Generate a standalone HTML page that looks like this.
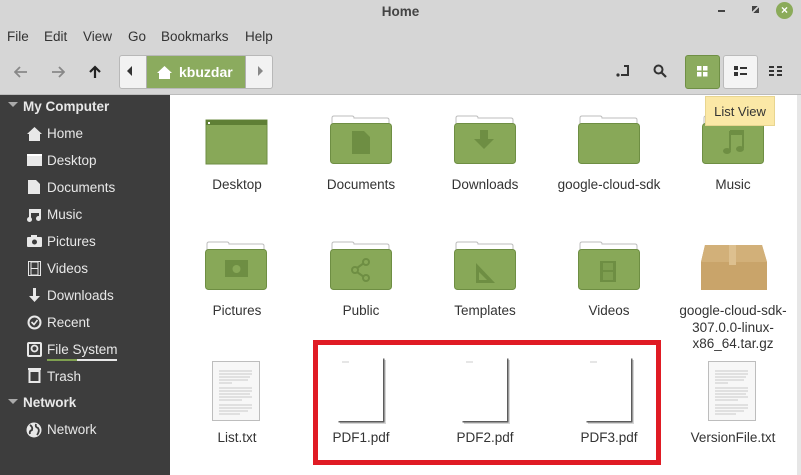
<!DOCTYPE html>
<html><head><meta charset="utf-8"><style>
*{margin:0;padding:0;box-sizing:border-box}
body{width:801px;height:475px;overflow:hidden;background:#d6d6d6;font-family:"Liberation Sans","DejaVu Sans",sans-serif;position:relative;color:#303030}
.a{position:absolute}
.menu span{position:absolute;top:29px;font-size:13.5px;color:#333}
.side{left:0;top:95px;width:170px;height:380px;background:#3d3d3d;color:#e8e8e8}
.side div{position:absolute;font-size:13.5px}
.content{left:170px;top:95px;width:627px;height:380px;background:#fff}
.lbl{position:absolute;width:124px;text-align:center;font-size:13.5px;color:#333;line-height:16px}
.ic{position:absolute}
</style></head><body>
<div class="a" style="left:0;top:4px;width:801px;text-align:center;font-size:13.5px;font-weight:bold;color:#444">Home</div>
<div class="a" style="left:718px;top:10px;width:7px;height:2px;background:#444"></div>
<div class="a" style="left:752px;top:6px;width:7px;height:7px;background:linear-gradient(135deg,#444 40%,transparent 40%,transparent 60%,#444 60%)"></div>
<div class="a" style="left:776px;top:2px;width:17px;height:17px;border-radius:50%;background:#8bab5a;color:#fff;font-size:12px;font-weight:bold;text-align:center;line-height:17px">×</div>
<div class="menu"><span style="left:7px">File</span><span style="left:44px">Edit</span><span style="left:83px">View</span><span style="left:128px">Go</span><span style="left:161px">Bookmarks</span><span style="left:245px">Help</span></div>
<!-- toolbar -->
<svg class="a" style="left:14px;top:66px" width="14" height="12"><path d="M13 6H2M6 1L1 6L6 11" fill="none" stroke="#888" stroke-width="1.8"/></svg>
<svg class="a" style="left:51px;top:66px" width="14" height="12"><path d="M1 6H12M8 1L13 6L8 11" fill="none" stroke="#888" stroke-width="1.8"/></svg>
<svg class="a" style="left:89px;top:65px" width="12" height="14"><path d="M6 13V2M1 7L6 2L11 7" fill="none" stroke="#222" stroke-width="2.2"/></svg>
<div class="a" style="left:119px;top:55px;width:154px;height:34px;border:1px solid #b8b8b8;border-radius:3px;background:#f2f2f2;overflow:hidden">
 <div class="a" style="left:7px;top:10px;width:0;height:0;border-top:5px solid transparent;border-bottom:5px solid transparent;border-right:5px solid #333"></div>
 <div class="a" style="left:26px;top:0;width:100px;height:34px;background:#8bab5e;border-left:1px solid #b0b0b0;border-right:1px solid #b0b0b0"></div>
 <svg class="a" style="left:37px;top:10px" width="15" height="13"><path d="M7.5 0L15 7H13V13H2V7H0Z" fill="#fff"/></svg>
 <div class="a" style="left:59px;top:8px;color:#fff;font-weight:bold;font-size:14px">kbuzdar</div>
 <div class="a" style="left:138px;top:10px;width:0;height:0;border-top:5px solid transparent;border-bottom:5px solid transparent;border-left:5px solid #888"></div>
</div>
<svg class="a" style="left:616px;top:64px" width="16" height="14"><path d="M8 2H12V11H5" fill="none" stroke="#333" stroke-width="2"/><circle cx="2" cy="11" r="1.6" fill="#333"/></svg>
<svg class="a" style="left:653px;top:64px" width="14" height="14"><circle cx="5.5" cy="5.5" r="4" fill="none" stroke="#333" stroke-width="2"/><path d="M8.5 8.5L13 13" stroke="#333" stroke-width="2.2"/></svg>
<div class="a" style="left:685px;top:55px;width:35px;height:34px;background:#8bab5e;border:1px solid #6f8f45;border-radius:3px"></div>
<svg class="a" style="left:697px;top:66px" width="11" height="11" fill="#fff"><rect x="0" y="0" width="4.5" height="4.5"/><rect x="6" y="0" width="4.5" height="4.5"/><rect x="0" y="6" width="4.5" height="4.5"/><rect x="6" y="6" width="4.5" height="4.5"/></svg>
<div class="a" style="left:723px;top:55px;width:35px;height:34px;background:#f4f4f4;border:1px solid #bbb;border-radius:3px"></div>
<svg class="a" style="left:734px;top:66px" width="14" height="11" fill="#333"><rect x="0" y="0" width="4" height="4"/><rect x="6" y="1" width="7" height="2"/><rect x="0" y="6" width="4" height="4"/><rect x="6" y="7" width="7" height="2"/></svg>
<svg class="a" style="left:769px;top:66px" width="14" height="11" fill="#333"><rect x="0" y="0" width="5" height="2"/><rect x="8" y="0" width="5" height="2"/><rect x="0" y="4" width="5" height="2"/><rect x="8" y="4" width="5" height="2"/><rect x="0" y="8" width="5" height="2"/><rect x="8" y="8" width="5" height="2"/></svg>
<div class="a" style="left:0;top:94px;width:801px;height:1px;background:#bcbcbc"></div>
<!-- sidebar -->
<div class="a side">
 <div style="left:8px;top:7px;width:0;height:0;border-left:5px solid transparent;border-right:5px solid transparent;border-top:5px solid #aaa"></div>
 <div style="left:23px;top:4px;font-weight:bold">My Computer</div>
 <svg style="position:absolute;left:27px;top:32px" width="15" height="14"><path d="M7.5 0L15 7H13V14H2V7H0Z" fill="#e8e8e8"/></svg><div style="left:47px;top:31px">Home</div>
 <div style="left:27px;top:59px;width:15px;height:12px;background:#e8e8e8;border-top:2px solid #fff"></div><div style="left:47px;top:58px">Desktop</div>
 <svg style="position:absolute;left:28px;top:85px" width="12" height="14"><path d="M0 0H8L12 4V14H0Z" fill="#e8e8e8"/></svg><div style="left:47px;top:85px">Documents</div>
 <svg style="position:absolute;left:27px;top:113px" width="14" height="14"><path d="M3 11V2H13V10M3 2V4H13" fill="none" stroke="#e8e8e8" stroke-width="2"/><circle cx="2.5" cy="11.5" r="2.5" fill="#e8e8e8"/><circle cx="11.5" cy="10.5" r="2.5" fill="#e8e8e8"/></svg><div style="left:47px;top:112px">Music</div>
 <svg style="position:absolute;left:27px;top:140px" width="15" height="12"><rect x="0" y="2" width="15" height="10" rx="1" fill="#e8e8e8"/><rect x="4" y="0" width="6" height="3" fill="#e8e8e8"/><circle cx="7.5" cy="7" r="2.5" fill="#3d3d3d"/></svg><div style="left:47px;top:139px">Pictures</div>
 <svg style="position:absolute;left:28px;top:166px" width="13" height="15"><rect x="0.5" y="0.5" width="12" height="14" fill="none" stroke="#e8e8e8"/><rect x="3" y="1" width="7" height="13" fill="none" stroke="#e8e8e8"/><path d="M3 7.5H10" stroke="#e8e8e8"/></svg><div style="left:47px;top:166px">Videos</div>
 <svg style="position:absolute;left:28px;top:193px" width="13" height="14"><path d="M5 0H8V8H12L6.5 14L1 8H5Z" fill="#e8e8e8"/></svg><div style="left:47px;top:193px">Downloads</div>
 <svg style="position:absolute;left:27px;top:220px" width="15" height="15"><circle cx="7.5" cy="7.5" r="6" fill="none" stroke="#e8e8e8" stroke-width="2"/><path d="M4.5 7L7 9.5L10.5 5" fill="none" stroke="#e8e8e8" stroke-width="1.6"/></svg><div style="left:47px;top:220px">Recent</div>
 <svg style="position:absolute;left:27px;top:247px" width="15" height="15"><rect x="1" y="1" width="13" height="13" rx="1" fill="none" stroke="#e8e8e8" stroke-width="2"/><circle cx="7.5" cy="6.5" r="3" fill="none" stroke="#e8e8e8" stroke-width="1.8"/></svg><div style="left:47px;top:247px">File System</div>
 <div style="left:47px;top:264px;width:70px;height:2px;background:#e8e8e8"></div><div style="left:47px;top:264px;width:30px;height:2px;background:#7fa050"></div>
 <svg style="position:absolute;left:28px;top:273px" width="13" height="15"><rect x="0" y="0" width="13" height="2" fill="#e8e8e8"/><rect x="1.5" y="3" width="10" height="11" fill="none" stroke="#e8e8e8" stroke-width="2"/></svg><div style="left:47px;top:274px">Trash</div>
 <div style="left:8px;top:304px;width:0;height:0;border-left:5px solid transparent;border-right:5px solid transparent;border-top:5px solid #aaa"></div>
 <div style="left:23px;top:300px;font-weight:bold">Network</div>
 <svg style="position:absolute;left:26px;top:327px" width="16" height="16"><circle cx="8" cy="8" r="7.5" fill="#e8e8e8"/><path d="M4 3Q7 5 6 8Q3 9 4 12M10 2Q9 5 12 6Q14 9 11 13" fill="none" stroke="#3d3d3d" stroke-width="1.8"/></svg><div style="left:47px;top:327px">Network</div>
</div>
<div class="a content"></div>
<div class="a" style="left:797px;top:95px;width:4px;height:380px;background:#e6e6e6"></div>

<svg class="a" style="left:0;top:0" width="801" height="475">
 <defs>
  <g id="f">
   <path d="M2 8V2Q2 0 4 0H22Q24 0 24 2H57Q59 2 59 4V8Z" fill="#fff" stroke="#bdbdbd"/>
   <rect x="0.5" y="7.5" width="61" height="40" rx="3" fill="#88a858" stroke="#6e8e43"/>
  </g>
  <g id="doc">
   <rect x="0.5" y="0.5" width="47" height="59" fill="#f7f7f7" stroke="#bdbdbd"/>
   <g stroke="#c8c8c8" stroke-width="1"><path d="M7 10H40M7 13H40M7 16H38M7 19H36M7 22H20M7 27H40M7 30H40M7 33H38M7 36H40M7 39H30M7 44H40M7 47H40M7 50H36M7 53H28"/></g>
  </g>
  <g id="pdf">
   <rect x="3" y="3" width="46" height="64" fill="#888" opacity="0.35"/>
   <rect x="1.5" y="1.5" width="46" height="64" fill="#333" opacity="0.75"/>
   <rect x="0" y="0" width="46" height="64" fill="#fff"/>
   <path d="M5 5H12" stroke="#ccc"/>
  </g>
 </defs>
 <!-- row1 -->
 <rect x="206" y="120" width="61" height="44" fill="#88a858" stroke="#6e8e43"/>
 <rect x="206" y="120" width="61" height="5" fill="#5f7f35"/>
 <rect x="208" y="122" width="2" height="2" fill="#fff"/>
 <use href="#f" x="330" y="116"/>
 <path d="M352 131H364L370 137V154H352Z" fill="#6e8e43"/>
 <use href="#f" x="454" y="116"/>
 <path d="M480 130H488V139H494L484 149L474 139H480Z" fill="#6e8e43"/>
 <use href="#f" x="578" y="116"/>
 <use href="#f" x="702" y="116"/>
 <path d="M730 131H743V148M730 131V150" fill="none" stroke="#6e8e43" stroke-width="2"/><rect x="730" y="131" width="13" height="4" fill="#6e8e43"/>
 <ellipse cx="727" cy="151" rx="4" ry="3" fill="#6e8e43"/><ellipse cx="740" cy="149" rx="4" ry="3" fill="#6e8e43"/>
 <!-- row2 -->
 <use href="#f" x="205" y="242"/>
 <rect x="225" y="260" width="23" height="17" fill="#6e8e43"/><circle cx="236.5" cy="269" r="4" fill="#88a858"/>
 <use href="#f" x="330" y="242"/>
 <g fill="none" stroke="#6e8e43" stroke-width="2"><circle cx="366" cy="262" r="3"/><circle cx="355" cy="270" r="3"/><circle cx="366" cy="278" r="3"/><path d="M357 268L364 263M357 272L364 277"/></g>
 <use href="#f" x="454" y="242"/>
 <path d="M476 263V283H495Z M479 272V280H487Z" fill="#6e8e43" fill-rule="evenodd"/>
 <use href="#f" x="578" y="242"/>
 <rect x="600" y="261" width="16" height="21" fill="#6e8e43"/><rect x="603" y="263" width="10" height="7" fill="#7e9e50"/><rect x="603" y="272" width="10" height="8" fill="#7e9e50"/>
 <path d="M705 245H762L767 262V290H701V262Z" fill="#c9a46a"/>
 <path d="M705 245H762L767 262H701Z" fill="#d2b079"/>
 <rect x="729" y="245" width="7" height="20" fill="#ddc08f"/>
 <!-- row3 -->
 <use href="#doc" x="212" y="361"/>
 <use href="#pdf" x="337" y="357"/>
 <use href="#pdf" x="461" y="357"/>
 <use href="#pdf" x="585" y="357"/>
 <use href="#doc" x="708" y="361"/>
 <rect x="315.5" y="342.5" width="343" height="120" fill="none" stroke="#e01b24" stroke-width="5"/>
</svg>
<div class="lbl" style="left:175px;top:177px">Desktop</div>
<div class="lbl" style="left:299px;top:177px">Documents</div>
<div class="lbl" style="left:423px;top:177px">Downloads</div>
<div class="lbl" style="left:547px;top:177px">google-cloud-sdk</div>
<div class="lbl" style="left:671px;top:177px">Music</div>
<div class="lbl" style="left:175px;top:303px">Pictures</div>
<div class="lbl" style="left:299px;top:303px">Public</div>
<div class="lbl" style="left:423px;top:303px">Templates</div>
<div class="lbl" style="left:547px;top:303px">Videos</div>
<div class="lbl" style="left:671px;top:303px;line-height:16.5px">google-cloud-sdk-<br>307.0.0-linux-<br>x86_64.tar.gz</div>
<div class="lbl" style="left:175px;top:430px">List.txt</div>
<div class="lbl" style="left:299px;top:430px">PDF1.pdf</div>
<div class="lbl" style="left:423px;top:430px">PDF2.pdf</div>
<div class="lbl" style="left:547px;top:430px">PDF3.pdf</div>
<div class="lbl" style="left:671px;top:430px">VersionFile.txt</div>
<div class="a" style="left:705px;top:96px;width:70px;height:30px;background:#fbe8a6;border:1px solid #e8d590;font-size:13px;color:#333;text-align:center;line-height:29px">List View</div>
</body></html>
